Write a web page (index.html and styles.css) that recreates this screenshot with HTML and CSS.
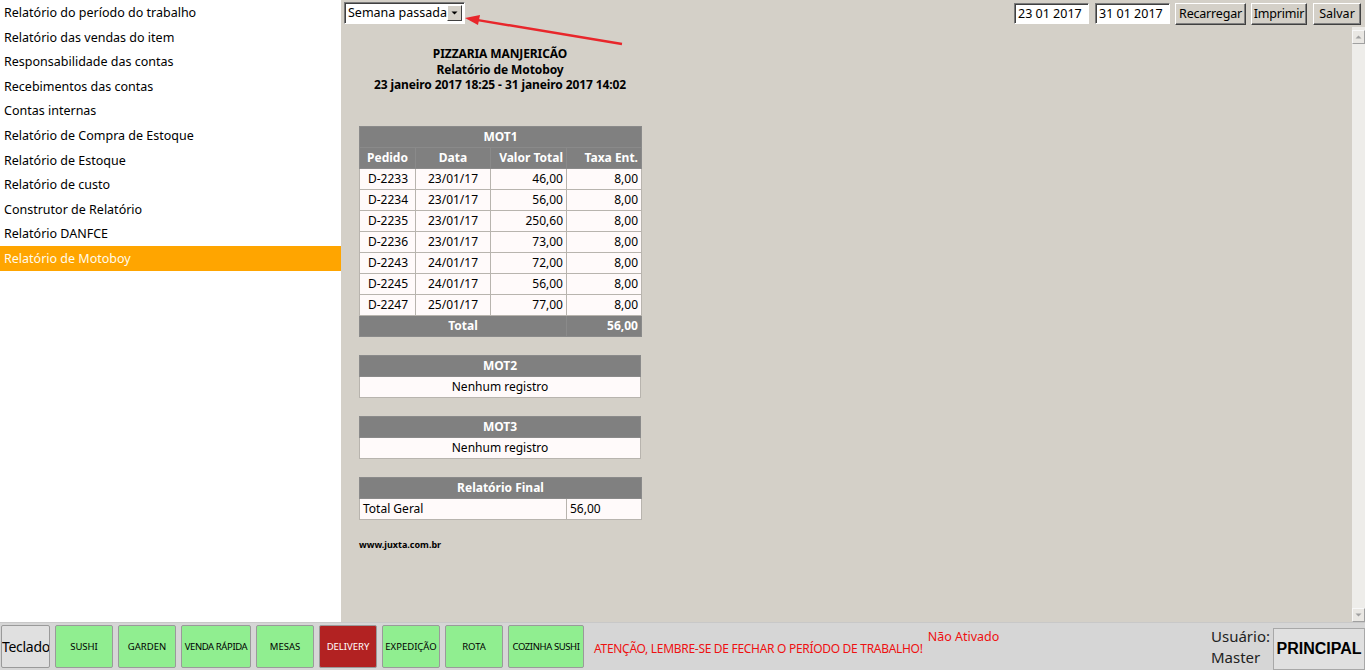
FILE: index.html
```html
<!DOCTYPE html>
<html lang="pt">
<head>
<meta charset="utf-8">
<title>Relatório de Motoboy</title>
<link rel="stylesheet" href="styles.css">
</head>
<body>
<div class="app">
  <div class="top">
    <nav class="sidebar">
      <div class="item">Relatório do período do trabalho</div>
      <div class="item">Relatório das vendas do item</div>
      <div class="item">Responsabilidade das contas</div>
      <div class="item">Recebimentos das contas</div>
      <div class="item">Contas internas</div>
      <div class="item">Relatório de Compra de Estoque</div>
      <div class="item">Relatório de Estoque</div>
      <div class="item">Relatório de custo</div>
      <div class="item">Construtor de Relatório</div>
      <div class="item">Relatório DANFCE</div>
      <div class="item active">Relatório de Motoboy</div>
    </nav>
    <main class="main">
      <div class="toolbar">
        <div class="select"><span class="select-text">Semana passada</span><span class="select-btn"><svg width="7" height="4" viewBox="0 0 7 4"><path d="M0.5 0.5h6L3.5 3.5z" fill="#000"/></svg></span></div>
        <div class="spacer"></div>
        <div class="date">23 01 2017</div>
        <div class="date">31 01 2017</div>
        <button class="btn b1">Recarregar</button>
        <button class="btn b2">Imprimir</button>
        <button class="btn b3">Salvar</button>
      </div>
      <svg class="arrow" width="170" height="40" viewBox="0 0 170 40"><line x1="157" y1="27" x2="10" y2="2.6" stroke="#e8262b" stroke-width="2.4"/><path d="M0 1 L15 -2 L13 8 Z" fill="#e8262b"/></svg>
      <div class="content">
        <div class="report">
          <div class="rhead">
            <div>PIZZARIA MANJERICÃO</div>
            <div>Relatório de Motoboy</div>
            <div>23 janeiro 2017 18:25 - 31 janeiro 2017 14:02</div>
          </div>
          <table class="tbl t1">
            <colgroup><col class="c1"><col class="c2"><col class="c3"><col class="c4"></colgroup>
            <tr><th colspan="4">MOT1</th></tr>
            <tr class="sub"><th>Pedido</th><th>Data</th><th class="r">Valor Total</th><th class="r">Taxa Ent.</th></tr>
            <tr><td>D-2233</td><td class="ctr">23/01/17</td><td class="r">46,00</td><td class="r">8,00</td></tr>
            <tr><td>D-2234</td><td class="ctr">23/01/17</td><td class="r">56,00</td><td class="r">8,00</td></tr>
            <tr><td>D-2235</td><td class="ctr">23/01/17</td><td class="r">250,60</td><td class="r">8,00</td></tr>
            <tr><td>D-2236</td><td class="ctr">23/01/17</td><td class="r">73,00</td><td class="r">8,00</td></tr>
            <tr><td>D-2243</td><td class="ctr">24/01/17</td><td class="r">72,00</td><td class="r">8,00</td></tr>
            <tr><td>D-2245</td><td class="ctr">24/01/17</td><td class="r">56,00</td><td class="r">8,00</td></tr>
            <tr><td>D-2247</td><td class="ctr">25/01/17</td><td class="r">77,00</td><td class="r">8,00</td></tr>
            <tr class="foot"><th colspan="3">Total</th><th class="r">56,00</th></tr>
          </table>
          <table class="tbl">
            <tr><th>MOT2</th></tr>
            <tr><td class="ctr">Nenhum registro</td></tr>
          </table>
          <table class="tbl">
            <tr><th>MOT3</th></tr>
            <tr><td class="ctr">Nenhum registro</td></tr>
          </table>
          <table class="tbl">
            <colgroup><col class="f1"><col class="f2"></colgroup>
            <tr><th colspan="2">Relatório Final</th></tr>
            <tr><td class="l">Total Geral</td><td class="l">56,00</td></tr>
          </table>
          <div class="site">www.juxta.com.br</div>
        </div>
        <div class="scrollbar">
          <div class="sb-btn"><svg width="7" height="4" viewBox="0 0 7 4"><path d="M0.5 3.5h6L3.5 0.5z" fill="#a0a0a0"/></svg></div>
          <div class="sb-track"></div>
          <div class="sb-btn"><svg width="7" height="4" viewBox="0 0 7 4"><path d="M0.5 0.5h6L3.5 3.5z" fill="#a0a0a0"/></svg></div>
        </div>
      </div>
    </main>
  </div>
  <footer class="bottom">
    <button class="bb gray big">Teclado</button>
    <button class="bb green">SUSHI</button>
    <button class="bb green">GARDEN</button>
    <button class="bb green w70">VENDA RÁPIDA</button>
    <button class="bb green">MESAS</button>
    <button class="bb red">DELIVERY</button>
    <button class="bb green">EXPEDIÇÃO</button>
    <button class="bb green">ROTA</button>
    <button class="bb green w76">COZINHA SUSHI</button>
    <div class="warn">ATENÇÃO, LEMBRE-SE DE FECHAR O PERÍODO DE TRABALHO!</div>
    <div class="nao">Não Ativado</div>
    <div class="spacer"></div>
    <div class="user"><div>Usuário:</div><div>Master</div></div>
    <button class="principal">PRINCIPAL</button>
  </footer>
</div>
</body>
</html>
```
FILE: styles.css
```css
* { box-sizing: border-box; }
html, body { margin: 0; padding: 0; }
body {
  font-family: "Noto Sans", "DejaVu Sans", sans-serif;
  font-size: 13px;
  color: #000;
  background: #d4d0c8;
  width: 1365px;
  height: 670px;
  overflow: hidden;
}
.app {
  display: grid;
  grid-template-rows: 622px 48px;
  height: 670px;
}
.top { display: flex; min-height: 0; }
.sidebar {
  width: 341px;
  background: #fff;
  padding-top: 1px;
}
.item {
  height: 24.6px;
  line-height: 24px;
  padding-left: 4px;
  font-size: 12.5px;
  color: #000;
  white-space: nowrap;
}
.item.active { background: #ffa500; color: #fffbea; margin-top: -1px; line-height: 25px; }
.main {
  flex: 1;
  position: relative;
  display: flex;
  flex-direction: column;
  background: #d4d0c8;
}
.toolbar {
  height: 27px;
  display: flex;
  align-items: flex-start;
  padding: 2px 4px 0 3px;
}
.spacer { flex: 1; }
.select {
  width: 121px;
  height: 22px;
  display: flex;
  background: #fff;
  border: 1px solid #7a7a7a;
  border-right-color: #fff;
  border-bottom-color: #fff;
  box-shadow: inset 1px 1px 0 #404040;
}
.select-text {
  flex: 1;
  padding-left: 3px;
  line-height: 20px;
  font-size: 12.5px;
  white-space: nowrap;
  overflow: hidden;
}
.select-btn {
  width: 15px;
  flex: none;
  margin: 2px 2px 2px 0;
  background: #d4d0c8;
  border: 1px solid #fff;
  border-right-color: #404040;
  border-bottom-color: #404040;
  display: flex;
  align-items: center;
  justify-content: center;
}
.date {
  width: 75px;
  height: 21px;
  margin-top: 1px;
  background: #fff;
  border: 1px solid #7a7a7a;
  border-right-color: #fff;
  border-bottom-color: #fff;
  box-shadow: inset 1px 1px 0 #404040;
  padding-left: 3px;
  line-height: 19px;
  font-size: 12.5px;
  white-space: nowrap;
}
.date + .date { margin-left: 6px; }
.btn {
  font-family: inherit;
  font-size: 12.5px;
  height: 22px;
  margin-top: 1px;
  padding: 0;
  background: #d4d0c8;
  border: 1px solid #fff;
  border-right-color: #404040;
  border-bottom-color: #404040;
  box-shadow: inset -1px -1px 0 #808080;
  color: #000;
  line-height: 18px;
  white-space: nowrap;
}
.b1 { width: 71px; margin-left: 5px; letter-spacing: -0.2px; }
.b2 { width: 56px; margin-left: 5px; letter-spacing: -0.2px; }
.b3 { width: 48px; margin-left: 6px; }
.arrow {
  position: absolute;
  left: 124px;
  top: 17px;
  overflow: visible;
}
.content {
  flex: 1;
  display: flex;
  min-height: 0;
}
.report {
  flex: 1;
  padding: 19px 0 0 18px;
}
.rhead {
  width: 282px;
  text-align: center;
  font-weight: bold;
  font-size: 12px;
  line-height: 15.5px;
  margin-bottom: 33px;
  letter-spacing: -0.1px;
}
.tbl {
  width: 282px;
  border-collapse: collapse;
  table-layout: fixed;
  font-size: 12px;
  margin-bottom: 18px;
}
.tbl th {
  background: #808080;
  color: #fff;
  font-weight: bold;
  height: 21px;
  padding: 0 3px;
  text-align: center;
  border: 1px solid #8a8a8a;
}
.tbl td {
  background: #fffafa;
  height: 21px;
  padding: 0 3px 0 8px;
  border: 1px solid #b8b4ae;
  white-space: nowrap;
}
.tbl td.ctr { text-align: center; padding: 0 3px; }
.tbl td.l { padding: 0 3px; }
.tbl .r { text-align: right; }
.c1 { width: 56px; }
.c2 { width: 75px; }
.c3 { width: 76px; }
.c4 { width: 75px; }
.f1 { width: 207px; }
.f2 { width: 75px; }
.site {
  font-size: 9px;
  font-weight: bold;
  margin-top: 3px;
}
.scrollbar {
  width: 13px;
  display: flex;
  flex-direction: column;
  background: #eceae6;
}
.sb-btn {
  height: 14px;
  background: #e9e7e3;
  border: 1px solid #f8f8f8;
  border-right-color: #a0a0a0;
  border-bottom-color: #a0a0a0;
  display: flex;
  align-items: center;
  justify-content: center;
}
.sb-btn:first-child { margin-top: 3px; }
.sb-track { flex: 1; background: #eeedea; }
.bottom {
  display: flex;
  align-items: center;
  background: #d6d6d6;
  border-top: 1px solid #c8c8c8;
  padding: 0 0 0 1px;
  gap: 5px;
  height: 48px;
}
.bb {
  height: 43px;
  width: 58px;
  flex: none;
  font-family: inherit;
  font-size: 9.5px;
  padding: 0;
  border: 1px solid #9a9a9a;
  border-radius: 2px;
  color: #000;
  white-space: nowrap;
  overflow: hidden;
}
.bb.gray { background: #e0e0e0; width: 49px; }
.bb.big { font-size: 14px; letter-spacing: -0.3px; }
.bb.green { background: #90ee90; }
.bb.red { background: #b22222; color: #fff; }
.bb.w70 { width: 70px; letter-spacing: -0.4px; }
.bb.w76 { width: 76px; letter-spacing: -0.4px; }
.warn {
  color: #ee1111;
  font-size: 12px;
  letter-spacing: -0.3px;
  margin-left: 5px;
  padding-top: 3px;
  white-space: nowrap;
}
.nao {
  color: #ee1111;
  font-size: 12.5px;
  align-self: flex-start;
  margin-top: 5px;
  white-space: nowrap;
}
.user {
  font-size: 15px;
  line-height: 21px;
  color: #222;
  margin-right: -2px;
}
.principal {
  width: 92px;
  height: 42px;
  margin-top: 4px;
  flex: none;
  font-family: "Liberation Sans", Arial, sans-serif;
  font-weight: bold;
  font-size: 16px;
  background: #e0e0e0;
  border: 1px solid #a8a8a8;
  color: #000;
  padding: 0;
}
```
